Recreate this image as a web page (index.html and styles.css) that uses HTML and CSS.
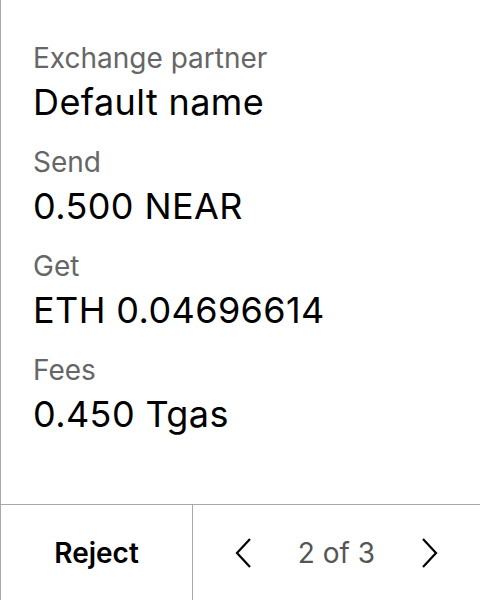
FILE: index.html
```html
<!DOCTYPE html>
<html lang="en">
<head>
<meta charset="utf-8">
<link rel="stylesheet" href="styles.css">
</head>
<body>
<div class="screen">
  <main class="details">
    <div class="item">
      <div class="label">Exchange partner</div>
      <div class="value">Default name</div>
    </div>
    <div class="item">
      <div class="label">Send</div>
      <div class="value">0.500 NEAR</div>
    </div>
    <div class="item">
      <div class="label">Get</div>
      <div class="value">ETH 0.04696614</div>
    </div>
    <div class="item">
      <div class="label">Fees</div>
      <div class="value">0.450 Tgas</div>
    </div>
  </main>
  <footer class="actions">
    <button class="reject">Reject</button>
    <div class="pager">
      <button class="nav" aria-label="Previous">
        <svg width="16" height="30" viewBox="0 0 16 30"><path d="M15 1 L2 15 L15 29" fill="none" stroke="#000" stroke-width="2.2"/></svg>
      </button>
      <span class="count">2 of 3</span>
      <button class="nav" aria-label="Next">
        <svg width="16" height="30" viewBox="0 0 16 30"><path d="M1 1 L14 15 L1 29" fill="none" stroke="#000" stroke-width="2.2"/></svg>
      </button>
    </div>
  </footer>
</div>
</body>
</html>
```
FILE: styles.css
```css
* { box-sizing: border-box; }
html, body { margin: 0; padding: 0; background: #fff; }
body { font-family: Inter, "Noto Sans", sans-serif; color: #000; }
.screen {
  width: 480px;
  height: 600px;
  border-left: 1px solid #a8a8a8;
  display: flex;
  flex-direction: column;
}
.details {
  flex: 1;
  padding: 40px 0 0 32px;
  display: flex;
  flex-direction: column;
  gap: 20px;
}
.item { display: flex; flex-direction: column; gap: 4px; }
.label { font-size: 28px; line-height: 36px; color: #666; }
.value { font-size: 36px; line-height: 44px; font-weight: 400; letter-spacing: 0.4px; color: #000; }
.actions {
  height: 96px;
  border-top: 1px solid #a8a8a8;
  display: flex;
}
.reject {
  width: 192px;
  border: none;
  border-right: 1px solid #a8a8a8;
  background: none;
  font-family: inherit;
  font-size: 28px;
  font-weight: 600;
  color: #000;
  padding: 0;
}
.pager {
  flex: 1;
  display: flex;
  align-items: center;
  justify-content: center;
  gap: 47px;
}
.nav {
  border: none;
  background: none;
  padding: 0;
  width: 16px;
  height: 30px;
  display: flex;
}
.count { font-size: 28px; color: #555; }
```
